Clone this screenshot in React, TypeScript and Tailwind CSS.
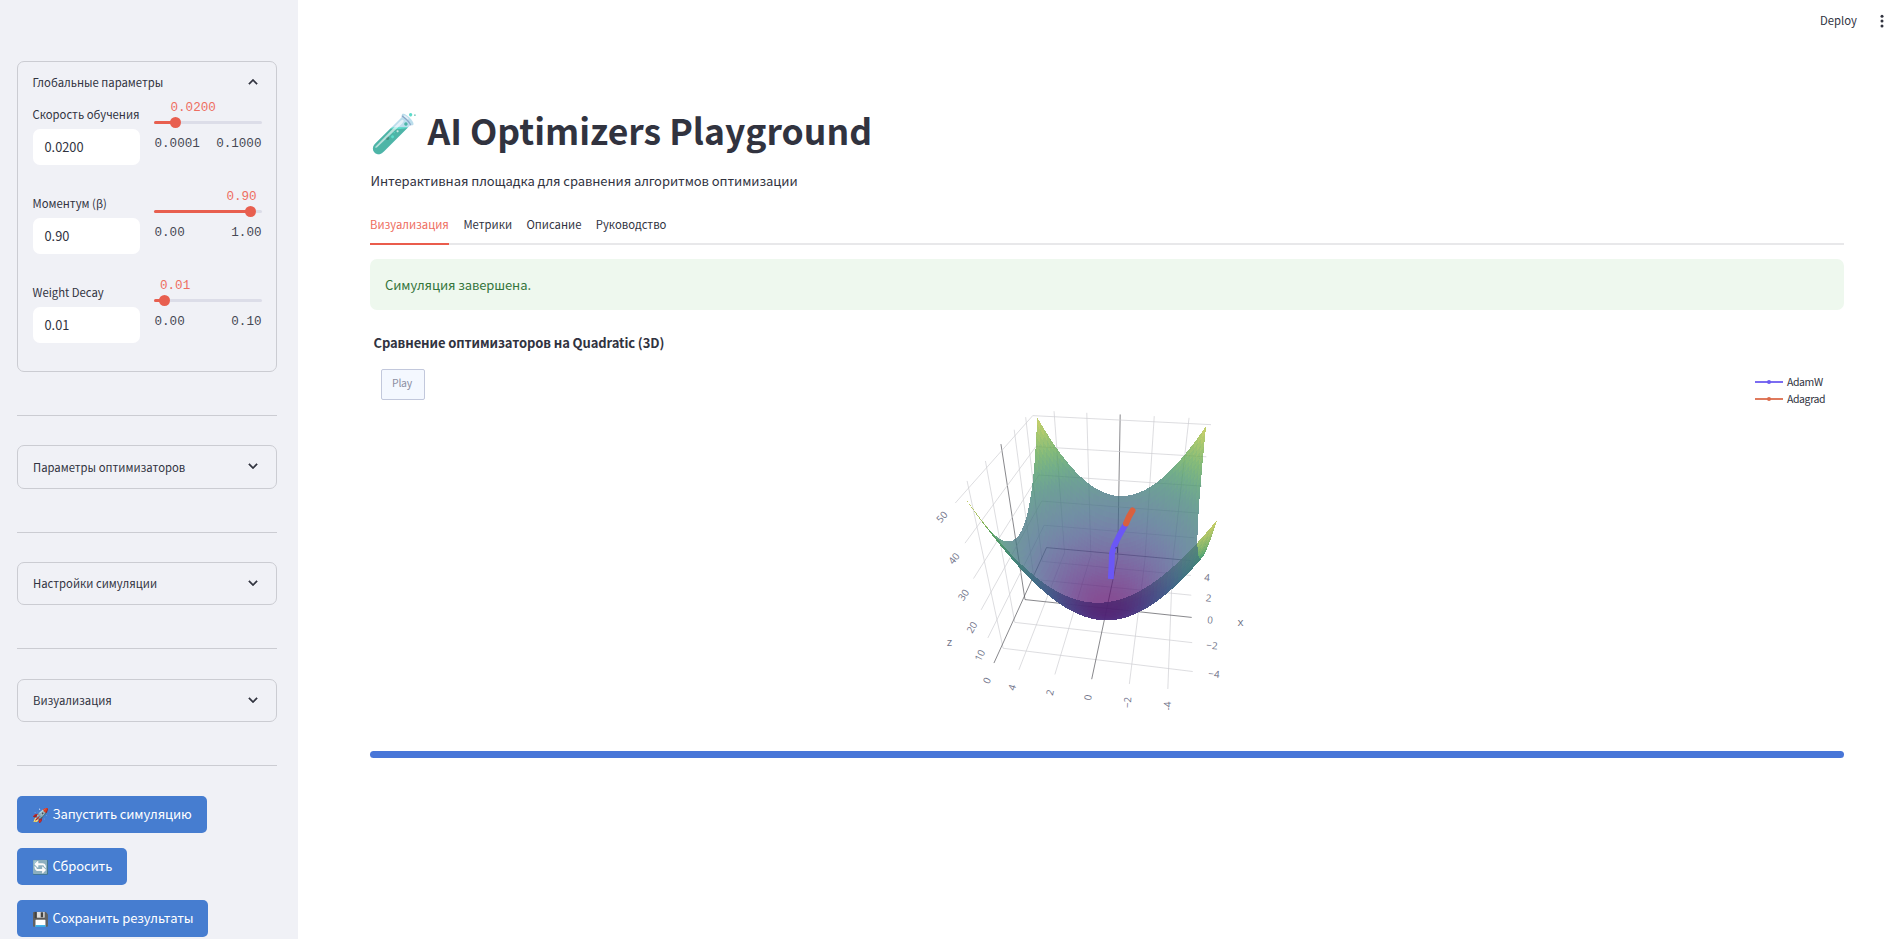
import React from "react";

type Point = [number, number];

const slidersData = [
  { label: "Скорость обучения", value: "0.0200", min: "0.0001", max: "0.1000", thumb: 21.5, text: 16.5 },
  { label: "Моментум (β)", value: "0.90", min: "0.00", max: "1.00", thumb: 96.5, text: 72.4 },
  { label: "Weight Decay", value: "0.01", min: "0.00", max: "0.10", thumb: 10.5, text: 6 },
];

const tabs = ["Метрики", "Описание", "Руководство"];

function Chevron({ up = false }: { up?: boolean }) {
  return (
    <svg width="18" height="18" viewBox="0 0 24 24" fill="#31333f" stroke="#31333f" strokeWidth="0.5" className="-mt-[1px]">
      <path d={up ? "M12 8l-6 6 1.41 1.41L12 10.83l4.59 4.58L18 14z" : "M7.41 8.59 12 13.17l4.59-4.58L18 10l-6 6-6-6z"} />
    </svg>
  );
}

function ParamRow({ label, value, min, max, thumb, text }: (typeof slidersData)[number]) {
  return (
    <div className="flex h-[89px] gap-[14.5px]">
      <div className="w-[107px] shrink-0">
        <div className="h-[24px] whitespace-nowrap text-[11.3px] leading-[18px]">{label}</div>
        <div className="h-[36px] rounded-[7px] bg-white pl-[12px] text-[12.8px] leading-[36px]">{value}</div>
      </div>
      <div className="w-[107.5px] shrink-0 font-['Liberation_Mono',monospace] text-[12.6px]">
        <div className="h-[20.5px]">
          <span className="-mt-[5px] block leading-[16px] text-[#ee6e61]" style={{ marginLeft: text }}>{value}</span>
        </div>
        <div className="relative h-[3px] rounded-full bg-[#dcdde8]">
          <div className="h-[3px] rounded-full bg-[#e85f4f]" style={{ width: thumb }} />
          <div className="absolute -top-[4px] size-[11px] rounded-full bg-[#e85f4f]" style={{ left: thumb - 5.5 }} />
        </div>
        <div className="mt-[12px] flex justify-between pl-[0.5px] leading-[16px] text-[#464854]">
          <span>{min}</span>
          <span>{max}</span>
        </div>
      </div>
    </div>
  );
}

function Section({ title }: { title: string }) {
  return (
    <>
      <div className="h-px shrink-0 bg-[#cbccd2]" />
      <div className="my-[29.2px] flex h-[43.6px] shrink-0 items-center justify-between rounded-[7px] border border-[#cbccd2] pl-[15px] pr-[14px] text-[11.3px]">
        {title}
        <Chevron />
      </div>
      <div className="h-[13.7px] shrink-0" />
    </>
  );
}

function PrimaryButton({ icon, children }: { icon: string; children: string }) {
  return (
    <button className="flex h-[37.4px] shrink-0 items-center self-start rounded-[5px] bg-[#467dd0] px-[15px] pb-px text-[13px] tracking-[-0.1px] text-white">
      <span className="mr-[4px] w-[16.5px] text-[13.6px]">{icon}</span>
      {children}
    </button>
  );
}

// Camera projection of data space onto the chart canvas.
const P = [0.10299, -0.58774, -0.00948, 0.07143, -0.35569, -0.05279, -0.47726, -0.06739, 0.17457, 0.02633, -0.12269];
const project = (x0: number, y0: number, z0: number) => {
  const x = x0 / 5, y = y0 / 5, z = z0 / 25 - 1;
  const w = P[8] * x + P[9] * y + P[10] * z + 1;
  return {
    u: ((P[0] * x + P[1] * y + P[2] * z + P[3]) / w) * 150 + 1096,
    v: ((P[4] * x + P[5] * y + P[6] * z + P[7]) / w) * 150 + 550,
    w,
  };
};

type Stop = [number, number, number, number];
const innerStops: Stop[] = [
  [0, 133, 77, 147], [5, 127, 98, 160], [10, 122, 116, 166], [15, 118, 130, 168], [20, 114, 142, 165],
  [25, 112, 150, 158], [30, 110, 160, 150], [35, 114, 173, 138], [40, 132, 186, 122], [45, 166, 199, 112], [50, 206, 208, 106],
];
const outerStops: Stop[] = [
  [0, 88, 46, 118], [6, 82, 48, 122], [12, 66, 70, 130], [18, 50, 92, 130], [25, 50, 118, 128], [35, 85, 165, 115], [50, 206, 208, 100],
];
const shade = (stops: Stop[], z: number, alpha: number) => {
  let i = 0;
  while (i < stops.length - 2 && stops[i + 1][0] < z) i++;
  const a = stops[i], b = stops[i + 1];
  const t = Math.min(1, Math.max(0, (z - a[0]) / (b[0] - a[0])));
  const channel = (k: number) => Math.round(Math.max(0, (a[k] + (b[k] - a[k]) * t - 255 * (1 - alpha)) / alpha));
  return `rgb(${channel(1)},${channel(2)},${channel(3)})`;
};

const STEPS = 56;
const quads: { points: string; fill: string; depth: number; alpha: number }[] = [];
for (let i = 0; i < STEPS; i++) {
  for (let j = 0; j < STEPS; j++) {
    const at = (a: number, b: number) => {
      const x = -5 + (10 * a) / STEPS, y = -5 + (10 * b) / STEPS;
      return project(x, y, x * x + y * y);
    };
    const c = [at(i, j), at(i + 1, j), at(i + 1, j + 1), at(i, j + 1)];
    const area = c.reduce((s, p, k) => s + p.u * c[(k + 1) % 4].v - c[(k + 1) % 4].u * p.v, 0);
    const x = -5 + (10 * (i + 0.5)) / STEPS, y = -5 + (10 * (j + 0.5)) / STEPS;
    const z = x * x + y * y;
    const inside = area < 0;
    const alpha = inside ? 0.76 : 0.88;
    quads.push({
      points: c.map((p) => `${p.u.toFixed(2)},${p.v.toFixed(2)}`).join(" "),
      fill: shade(inside ? innerStops : outerStops, z, alpha),
      depth: c.reduce((s, p) => s + p.w, 0),
      alpha,
    });
  }
}
quads.sort((a, b) => a.depth - b.depth);

const X = 5.267, Y = 5.359, TOP = 51.683, FLOOR = -1.556, FRONT = -5.276, RIGHT = -5.291;
type Vec = [number, number, number];
const grid: { a: Vec; b: Vec; zero: boolean }[] = [];
for (const t of [-4, -2, 2, 4, 0]) {
  const zero = t === 0;
  grid.push({ a: [X, t, FLOOR], b: [X, t, TOP], zero });
  grid.push({ a: [t, Y, FLOOR], b: [t, Y, TOP], zero });
  grid.push({ a: [t, Y, FLOOR], b: [t, RIGHT, FLOOR], zero });
  grid.push({ a: [X, t, FLOOR], b: [FRONT, t, FLOOR], zero });
}
for (const z of [50, 40, 30, 20, 10, 0]) {
  grid.push({ a: [X, Y, z], b: [X, RIGHT, z], zero: z === 0 });
  grid.push({ a: [X, Y, z], b: [FRONT, Y, z], zero: z === 0 });
}

const ticks: [string, number, number, number][] = [
  ["50", 942, 517, -48], ["40", 954, 558.5, -52], ["30", 963.5, 595, -56], ["20", 972, 627.5, -60], ["10", 980, 655.5, -63], ["0", 987, 680.5, -66],
  ["4", 1012, 687.5, -72], ["2", 1050, 692.5, -77], ["0", 1088, 697.5, -82], ["−2", 1127.5, 702.5, -87], ["-4", 1167.5, 706, -92],
  ["4", 1207, 577.5, 5], ["2", 1208.5, 598, 5], ["0", 1210, 620, 5], ["−2", 1212, 645.5, 5], ["−4", 1214, 674, 5],
];

const adamw: Point[] = [[1110.8, 579], [1111.5, 566], [1112, 553], [1114, 546.5], [1119, 536], [1125.5, 524.5]];
const adagrad: Point[] = [[1126, 523.5], [1129, 516.5], [1132.5, 510.5]];
const path = (pts: Point[]) => pts.map((p) => p.join(",")).join(" ");

function Surface() {
  return (
    <svg width="340" height="345" viewBox="920 400 340 345">
      <g fill="none">
        {grid.map((g, i) => {
          const a = project(...g.a), b = project(...g.b);
          return <line key={i} x1={a.u} y1={a.v} x2={b.u} y2={b.v} stroke={g.zero ? "#55555a" : "#cfcfd2"} strokeWidth={0.7} />;
        })}
      </g>
      <g shapeRendering="crispEdges">
        {quads.map((q, i) => (
          <polygon key={i} points={q.points} fill={q.fill} fillOpacity={q.alpha} />
        ))}
      </g>
      <g fill="none" strokeLinecap="round" strokeLinejoin="round">
        <polyline points={path(adamw)} stroke="#6b57f5" strokeWidth="5.8" strokeLinecap="butt" />
        <polyline points={path(adagrad)} stroke="#d9603f" strokeWidth="6" />
        <path d="M1115.5 548l2-.5v5" stroke="#3f3a78" strokeWidth="1" />
      </g>
      <g fill="#6f7288" fontFamily="'Open Sans', sans-serif" fontSize="9.8" textAnchor="middle">
        {ticks.map(([t, x, y, r], i) => (
          <text key={i} transform={`translate(${x} ${y}) rotate(${r})`} y="3.5">{t}</text>
        ))}
        <text x="949.5" y="646" fontSize="11.5">z</text>
        <text x="1240.5" y="626" fontSize="11.5">x</text>
      </g>
    </svg>
  );
}

function LegendItem({ name, line }: { name: string; line: string }) {
  return (
    <div className="flex h-[17px] items-center gap-[4px]">
      <svg width="28" height="6" viewBox="0 0 28 6">
        <path d="M0 3h28" stroke={line} strokeWidth="1.8" />
        <circle cx="14" cy="3" r="2" fill={line} />
      </svg>
      <span className="text-[10.5px] tracking-[-0.4px]">{name}</span>
    </div>
  );
}

export default function App() {
  return (
    <div className="flex h-[939px] w-[1903px] overflow-hidden bg-white font-['Noto_Sans_CJK_SC','Noto_Sans',sans-serif] text-[#31333f]">
      <aside className="flex w-[298px] shrink-0 flex-col bg-[#f0f1f6] pl-[17px] pr-[21px] pt-[61px]">
        <div className="h-[311px] shrink-0 rounded-[7px] border border-[#cbccd2] pl-[14.5px]">
          <div className="flex h-[43px] items-center justify-between pb-[2px] pr-[14px] text-[11.3px]">
            Глобальные параметры
            <Chevron up />
          </div>
          {slidersData.map((s) => (
            <ParamRow key={s.label} {...s} />
          ))}
        </div>
        <div className="h-[43px] shrink-0" />
        <Section title="Параметры оптимизаторов" />
        <Section title="Настройки симуляции" />
        <Section title="Визуализация" />
        <div className="h-px shrink-0 bg-[#cbccd2]" />
        <div className="mt-[29.6px] flex flex-col gap-[14.6px]">
          <PrimaryButton icon="🚀">Запустить симуляцию</PrimaryButton>
          <PrimaryButton icon="🔄">Сбросить</PrimaryButton>
          <PrimaryButton icon="💾">Сохранить результаты</PrimaryButton>
        </div>
      </aside>

      <main className="flex flex-1 flex-col">
        <header className="flex h-[42px] shrink-0 items-center justify-end pr-[12px] text-[11.3px]">
          <span className="-mt-[2px]">Deploy</span>
          <svg className="ml-[16px]" width="18" height="18" viewBox="0 0 24 24" fill="#31333f">
            <circle cx="12" cy="5.5" r="2" />
            <circle cx="12" cy="12" r="2" />
            <circle cx="12" cy="18.5" r="2" />
          </svg>
        </header>
        <div className="flex flex-col pl-[72px] pr-[59px] pt-[61px]">
          <h1 className="flex h-[54px] items-center whitespace-nowrap text-[35.5px] font-bold">
            <span className="w-[48px] text-[39px] font-normal opacity-90 saturate-[.6]">🧪</span>
            <span className="ml-[9.5px]">AI Optimizers Playground</span>
          </h1>
          <p className="mt-[13px] h-[24px] whitespace-nowrap pl-[0.5px] text-[13px] leading-[22px] tracking-[-0.07px]">
            Интерактивная площадка для сравнения алгоритмов оптимизации
          </p>
          <nav className="mt-[13px] flex h-[38px] items-stretch gap-[14.4px] border-b-2 border-[#e8e8ea] text-[11.3px] leading-[35px]">
            <span className="-mb-[2px] w-[79px] border-b-2 border-[#ea5c4c] text-[#ee6c5e]">Визуализация</span>
            {tabs.map((t) => (
              <span key={t}>{t}</span>
            ))}
          </nav>
          <div className="mt-[14px] h-[51px] rounded-[7px] bg-[#eef8ee] pl-[15px] text-[13px] leading-[51px] tracking-[-0.1px] text-[#35753c]">
            Симуляция завершена.
          </div>
          <h2 className="mt-[21px] h-[24px] pl-[3.5px] text-[13px] font-bold leading-[24px] tracking-[-0.1px]">Сравнение оптимизаторов на Quadratic (3D)</h2>
          <div className="mt-[14px] flex h-[382px] items-start pl-[11px]">
            <button className="h-[31px] w-[44px] rounded-[2px] border border-[#c2c8dc] bg-[#f4f8ff] pb-[3px] pr-[2px] text-[10.5px] tracking-[-0.3px] text-[#8c8fa3]">Play</button>
            <div className="ml-[495px] mt-[31px]">
              <Surface />
            </div>
            <div className="ml-[495px] mt-[4.5px]">
              <LegendItem name="AdamW" line="#6c5cf0" />
              <LegendItem name="Adagrad" line="#dc6b4b" />
            </div>
          </div>
          <div className="h-[7px] rounded-full bg-[#4876d8]" />
        </div>
      </main>
    </div>
  );
}
